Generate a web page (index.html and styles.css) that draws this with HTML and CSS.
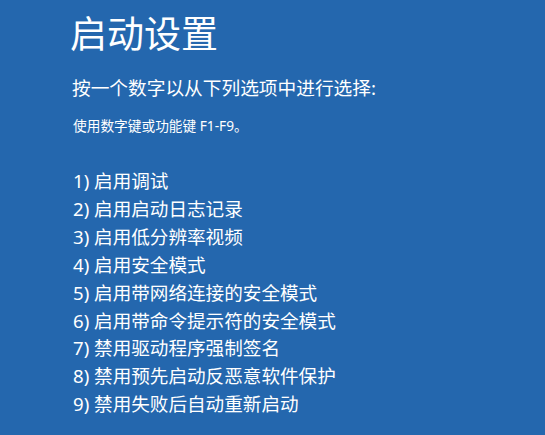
FILE: index.html
```html
<!DOCTYPE html>
<html lang="zh-CN">
<head>
<meta charset="utf-8">
<link rel="stylesheet" href="styles.css">
</head>
<body>
<main class="screen">
  <h1 class="title">启动设置</h1>
  <p class="prompt">按一个数字以从下列选项中进行选择:</p>
  <p class="hint">使用数字键或功能键 F1-F9。</p>
  <ol class="options">
    <li>1) 启用调试</li>
    <li>2) 启用启动日志记录</li>
    <li>3) 启用低分辨率视频</li>
    <li>4) 启用安全模式</li>
    <li>5) 启用带网络连接的安全模式</li>
    <li>6) 启用带命令提示符的安全模式</li>
    <li>7) 禁用驱动程序强制签名</li>
    <li>8) 禁用预先启动反恶意软件保护</li>
    <li>9) 禁用失败后自动重新启动</li>
  </ol>
</main>
</body>
</html>
```
FILE: styles.css
```css
html, body {
  margin: 0;
  padding: 0;
  height: 100%;
  background: #2467ae;
}
.screen {
  box-sizing: border-box;
  height: 435px;
  padding: 8px 0 0 70px;
  color: #ffffff;
  font-family: "Noto Sans", "Noto Sans CJK SC", sans-serif;
  overflow: hidden;
}
.title {
  margin: 0;
  font-size: 37px;
  font-weight: 400;
  line-height: 52px;
}
.prompt {
  margin: 15px 0 0 2px;
  font-size: 18.7px;
  line-height: 26px;
}
.hint {
  margin: 15px 0 0 3px;
  font-size: 13.7px;
  line-height: 20px;
}
.options {
  list-style: none;
  margin: 31px 0 0 3px;
  padding: 0;
  font-size: 18.6px;
  line-height: 27.9px;
}
```
